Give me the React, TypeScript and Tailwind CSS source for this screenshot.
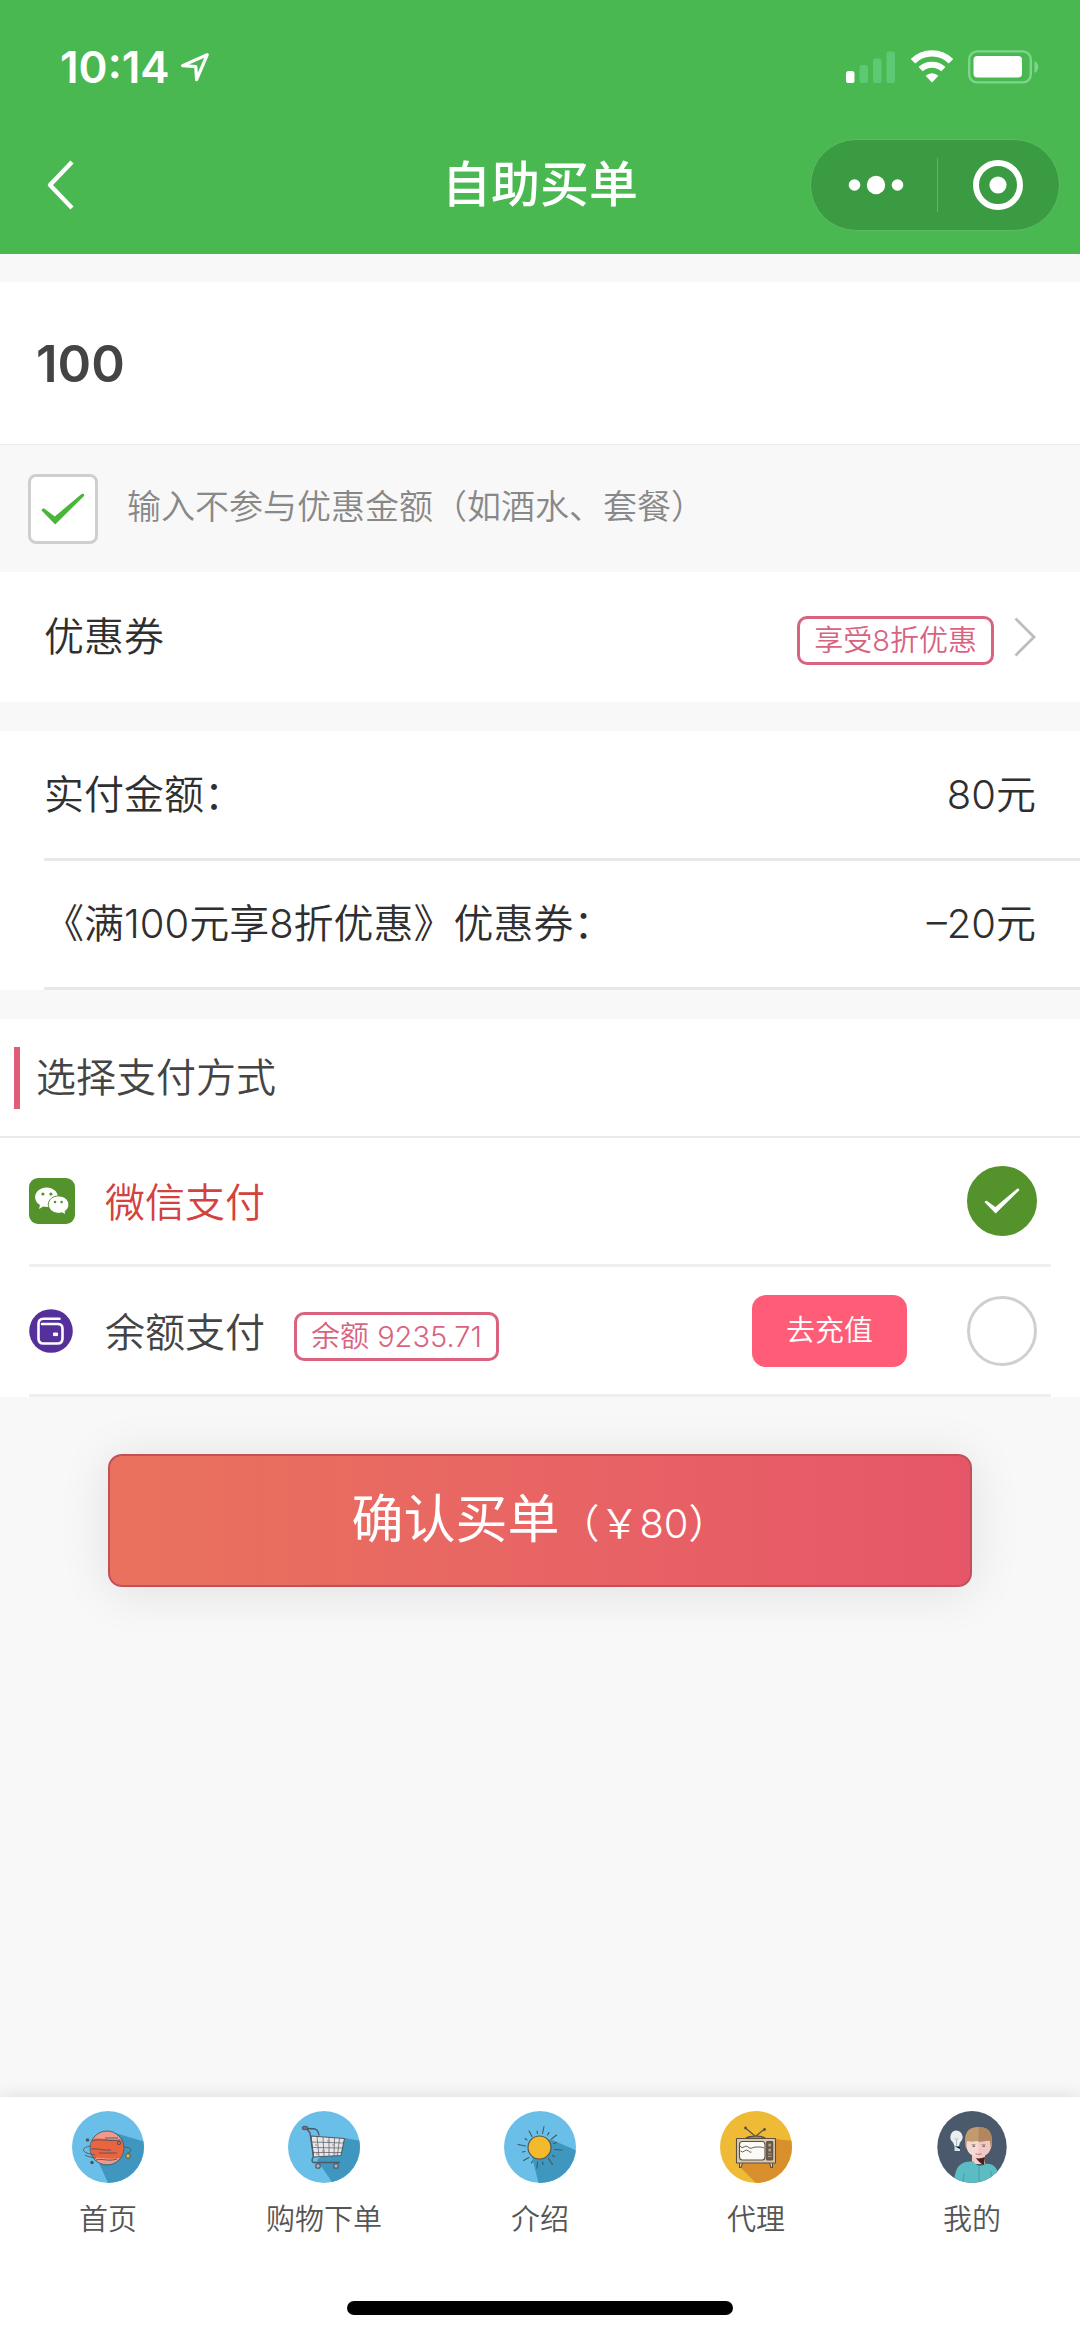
import { useState, type ReactNode } from "react";

function LocationIcon() {
  return (
    <svg viewBox="0 0 30 30" className="size-[30px]" fill="none" stroke="currentColor" strokeWidth="3.2" strokeLinejoin="round" aria-hidden="true">
      <path d="M27.2 2.8 2.6 13.6 15.8 14.6 16.6 27.6Z" />
    </svg>
  );
}

function SignalIcon() {
  return (
    <svg viewBox="0 0 50 32" className="h-8 w-[50px]" aria-hidden="true">
      <rect x="0" y="20" width="8.5" height="12" rx="2.6" fill="#fff" />
      <g fill="#5cca74">
        <rect x="13.5" y="14" width="8.5" height="18" rx="2.6" />
        <rect x="27" y="7.5" width="8.5" height="24.5" rx="2.6" />
        <rect x="40.5" y="0.5" width="8.5" height="31.5" rx="2.6" />
      </g>
    </svg>
  );
}

function WifiIcon() {
  return (
    <svg viewBox="0 0 44 33" className="h-[33px] w-11" fill="none" stroke="#fff" aria-hidden="true">
      <path d="M3 11.2a27 27 0 0 1 38 0" strokeWidth="6.4" />
      <path d="M10.6 19.2a16.5 16.5 0 0 1 22.8 0" strokeWidth="6" />
      <path d="M22 32.4 15.6 25.8a9.2 9.2 0 0 1 12.8 0Z" fill="#fff" stroke="none" />
    </svg>
  );
}

function BatteryIcon() {
  return (
    <svg viewBox="0 0 72 34" className="h-[34px] w-[72px]" aria-hidden="true">
      <rect x="1.2" y="1.4" width="61.6" height="31" rx="8" fill="none" stroke="#7ed68c" strokeWidth="2.4" />
      <rect x="5.5" y="6" width="48.5" height="21.5" rx="4" fill="#fff" />
      <path d="M66.5 11c5 2 5 10 0 12Z" fill="#7ed68c" />
    </svg>
  );
}

function BackIcon() {
  return (
    <svg viewBox="0 0 30 50" className="h-[50px] w-[30px]" fill="none" stroke="#fff" strokeWidth="4.4" aria-hidden="true">
      <path d="M26 2 4 25 26 48" strokeLinejoin="round" />
    </svg>
  );
}

function MoreIcon() {
  return (
    <svg viewBox="0 0 56 20" className="h-5 w-14" fill="#fff" aria-hidden="true">
      <circle cx="6.5" cy="10" r="5.8" />
      <circle cx="28" cy="10" r="9.2" />
      <circle cx="49.5" cy="10" r="5.8" />
    </svg>
  );
}

function TargetIcon() {
  return (
    <svg viewBox="0 0 50 50" className="size-[50px]" aria-hidden="true">
      <circle cx="25" cy="25" r="22" fill="none" stroke="#fff" strokeWidth="6" />
      <circle cx="25" cy="25" r="8.6" fill="#fff" />
    </svg>
  );
}

function WechatIcon() {
  return (
    <svg viewBox="0 0 46 46" className="size-[46px]" aria-hidden="true">
      <rect width="46" height="46" rx="9" fill="#54922c" />
      <path d="M17.6 9.5c6.3 0 11.4 4.3 11.4 9.7s-5.1 9.7-11.4 9.7c-1.2 0-2.300-.1-3.400-.4L10 31l1-4c-3-1.700-4.900-4.500-4.900-7.800 0-5.400 5.200-9.700 11.500-9.700Z" fill="#fff" />
      <path d="M29.600 17.900c5.700 0 10.300 3.900 10.300 8.700 0 2.800-1.500 5.200-3.900 6.800l.8 3.400-3.800-2c-1.100.3-2.200.5-3.400.5-5.700 0-10.300-3.900-10.300-8.700s4.600-8.700 10.300-8.700Z" fill="#fff" stroke="#54922c" strokeWidth="1" />
      <g fill="#54922c">
        <circle cx="13.9" cy="16" r="1.6" />
        <circle cx="21.9" cy="16" r="1.6" />
        <circle cx="26" cy="24" r="1.3" />
        <circle cx="32.6" cy="24" r="1.3" />
      </g>
    </svg>
  );
}

function WalletIcon() {
  return (
    <svg viewBox="0 0 44 44" className="size-11" fill="none" aria-hidden="true">
      <circle cx="22" cy="22" r="21.8" fill="#55309b" />
      <path d="M30.500 9.800H14.500Q9.500 9.800 9.500 15v14.500q0 5 5 5h14q5 0 5-5V19.500q0-4.500-5-4.500H13" stroke="#fff" strokeWidth="2.6" strokeLinecap="round" />
      <path d="M28.500 24H24.500v2.600h4Z" fill="#fff" stroke="#fff" strokeWidth="1" strokeLinejoin="round" />
    </svg>
  );
}

function PlanetIcon() {
  return (
    <svg viewBox="0 0 72 72" className="size-[72px]" fill="none" aria-hidden="true">
      <clipPath id="planet-disc"><circle cx="36" cy="36" r="36" /></clipPath>
      <clipPath id="planet-ball"><circle cx="35" cy="37" r="16.5" /></clipPath>
      <circle cx="36" cy="36" r="36" fill="#6abfe9" />
      <path clipPath="url(#planet-disc)" d="M43 22 74 31V74H37L26 50Z" fill="#3f97bf" />
      <circle cx="35" cy="37" r="16.5" fill="#f0988a" />
      <path clipPath="url(#planet-ball)" d="M16 29c12-4 26 2 38-1v17c-14 6-26 0-38 2Z" fill="#ea6440" />
      <g stroke="#4e5560" strokeWidth="0.9">
        <circle cx="35" cy="37" r="17" />
        <path d="M18.500 35C11 36 9 40 15 42c2 .8 5 1.500 8 2M52 36c8 .5 9 4 3 6.500" />
        <path d="M13 44c2 1.500 7 2.500 11 3M20 30c8-3 17 1 28-1M19 38c6-1 14 2 20 1M27 42h18M33 27h13M24 49c7-2 12 2 21-1" />
      </g>
      <g fill="#4e5560">
        <circle cx="15.5" cy="29" r="1.8" />
        <circle cx="20" cy="51.5" r="1.8" />
      </g>
      <circle cx="47" cy="32" r="1.7" fill="#e9603a" stroke="#4e5560" />
      <circle cx="56" cy="45" r="2.4" fill="#d8b83a" stroke="#4e5560" />
    </svg>
  );
}

function CartIcon() {
  return (
    <svg viewBox="0 0 72 72" className="size-[72px]" fill="none" aria-hidden="true">
      <clipPath id="cart-disc"><circle cx="36" cy="36" r="36" /></clipPath>
      <circle cx="36" cy="36" r="36" fill="#6abfe9" />
      <path clipPath="url(#cart-disc)" d="M56 27 74 30V74H46L29 49Z" fill="#3f97bf" />
      <path d="M23 25 56.500 27.500 53 44.500 25.500 46Z" fill="#e9e6e8" />
      <g stroke="#4c5966" strokeWidth="1.1" strokeLinejoin="round">
        <path d="M23 25 56.500 27.500 53 44.500 25.500 46Z" />
        <path d="M29 25.500 31 45.500M35 26l1 19M41 26.500V45M46.500 27l-.5 18M51.500 27.500 49.500 44.500M23.500 31 55 32M24 36.500 54 37M25 41.500 53.500 41.500" strokeWidth="0.7" />
        <path d="M20 17.500c7 0 10 0 11 7M25.500 46 22 22 19 18M25.500 46c-2 2-2 5 0 5.500H52M30 52v2M48 52v2" strokeWidth="1.4" />
        <ellipse cx="17" cy="17" rx="2.6" ry="1.7" fill="#8a6d76" />
        <circle cx="30" cy="55" r="2.3" fill="#a9b4bb" />
        <circle cx="48" cy="55" r="2.3" fill="#a9b4bb" />
      </g>
      <path d="M27 34h2M34 40h3M44 34h3M39 30h3M28 43h3M46 42h3" stroke="#c07c78" />
    </svg>
  );
}

function SunIcon() {
  return (
    <svg viewBox="0 0 72 72" className="size-[72px]" fill="none" aria-hidden="true">
      <clipPath id="sun-disc"><circle cx="36" cy="36" r="36" /></clipPath>
      <circle cx="36" cy="36" r="36" fill="#6abfe9" />
      <path clipPath="url(#sun-disc)" d="M46 28 74 40V74H35L28 46Z" fill="#3f97bf" />
      <circle cx="35.5" cy="36.5" r="11.5" fill="#f5b92e" stroke="#51584d" strokeWidth="1.2" />
      <g stroke="#44565f" strokeWidth="1.1" strokeLinecap="round">
        <path d="M38.500 22.500 40 15.500M33.500 22.500 33 20M43.500 24l1.500-2.500M28 25.500 25 20M23 29l-2-1.500M21.500 35 14 33.500M21 40.500l-2.500.5M25 46.500 19.500 49.500M28.500 50l-1 2M33.500 51l-.5 6M38.500 51l.5 2.500M44.500 47.500l4 6M48.500 44.500l2 1M50.500 38.500l7.500.5M49.500 32.500l3-1M47.500 28l5-4" />
      </g>
    </svg>
  );
}

function TvIcon() {
  return (
    <svg viewBox="0 0 72 72" className="size-[72px]" fill="none" aria-hidden="true">
      <clipPath id="tv-disc"><circle cx="36" cy="36" r="36" /></clipPath>
      <circle cx="36" cy="36" r="36" fill="#efba35" />
      <path clipPath="url(#tv-disc)" d="M55 28 74 30V74H38L19 55Z" fill="#d9902c" />
      <g stroke="#5c4f42" strokeWidth="1.1" strokeLinejoin="round">
        <path d="M35 25 25.500 17M36 25l8-6.500" />
        <path d="M26 27c3-2.500 16-2.500 19 0Z" fill="#d9c9a8" />
        <path d="M19.500 52v4.500h1.500l1.500-4.500M49.500 52l1.500 4.500h1.500V52" fill="#e6d9c0" />
        <rect x="16.5" y="27.5" width="39" height="24.5" fill="#d8c8ae" />
        <rect x="19.5" y="30.5" width="25.5" height="18.5" rx="3" fill="#fbfaf7" />
        <rect x="46.7" y="30.5" width="6" height="18.5" rx="0.8" fill="#6c5a4a" />
        <path d="M20 35q2 3 4 1t4 0 4 1 4-1 4 0 4 1M20.500 40q2 2 4 0t4 0 3 1" strokeWidth="0.9" />
      </g>
      <circle cx="49.7" cy="34" r="1.5" fill="#b7a58c" />
      <circle cx="49.7" cy="39" r="1.5" fill="#b7a58c" />
      <path d="M48 43h3.500M48 45.500h3.500" stroke="#b7a58c" strokeWidth="0.9" />
      <circle cx="25.5" cy="17" r="1.4" fill="#5c4f42" />
      <circle cx="44.5" cy="18.5" r="1.4" fill="#5c4f42" />
    </svg>
  );
}

function AvatarIcon() {
  return (
    <svg viewBox="0 0 70 72" className="h-[72px] w-[70px]" fill="none" aria-hidden="true">
      <clipPath id="avatar-disc"><ellipse cx="35" cy="36" rx="34.7" ry="36" /></clipPath>
      <g clipPath="url(#avatar-disc)">
        <rect width="70" height="72" fill="#4a596b" />
        <path d="M70 56c-6-2-10 4-9 10l-4 8h13Z" fill="#fff" />
        <path d="M35 43h13v10H35Z" fill="#f3cfc8" />
        <path d="M39 47c3 1 6 0 9-1l-1 8c-3-1-6-4-8-7Z" fill="#4b1f1c" />
        <path d="M17 70c1-9 3-16 10-18.500 5-1.500 7-.5 9-1.500 3 5 8 6 12 3 8-1 13 3 15 16l-6 8H20Z" fill="#5cbcc3" />
      </g>
      <path d="M29 29c-1 9 3 17 12.500 17S55.500 38 54.500 29l-5-6H34Z" fill="#f6d9d2" />
      <path d="M41.500 23v23C51 46 55.500 38 54.500 29l-5-6Z" fill="#f1c8c3" />
      <path d="M29 38c-2.500-13-.5-22 12.500-22s15 9 12.500 22l-1-8c-4-1.500-19 2-23 0Z" fill="#c39a70" />
      <path d="M41.500 16c13 0 15 9 12.500 22l-1-8c-3-1-8 1-11.500 1Z" fill="#b2875f" />
      <path d="M34.500 33.500h4M44.500 33.500h4" stroke="#b08d74" strokeWidth="0.8" />
      <path d="M35.500 35.200H38M45.500 35.200H48" stroke="#4c5664" strokeWidth="1.3" />
      <path d="M38.500 42.800q3 1.200 6 0" stroke="#c9606b" strokeWidth="0.9" />
      <path d="M42 54v17M27 62l-1 8M54 60v5" stroke="#3f8f96" strokeWidth="0.7" />
      <path d="M18.700 19.500a6.700 6.700 0 0 1 4.800 11.500c-1 1-1 2.500-1.500 4.500h-4.500c-.5-2-1-3.500-2-4.500a6.700 6.700 0 0 1 3.200-11.500Z" fill="#e9eef0" />
      <path d="M17.500 27l2 2 1.500-2M19.500 29v6" stroke="#a3adb3" strokeWidth="0.8" />
      <path d="M17.500 35.500H23V40h-5.500Z" fill="#cfe3ea" />
      <path d="M18 35.500h5V38Z" fill="#16181c" />
    </svg>
  );
}

function CheckMark({ className }: { className: string }) {
  return (
    <svg viewBox="0 0 44 32" className={className} fill="currentColor" aria-hidden="true">
      <path d="M0.600 17.600Q0.800 15.200 3.200 15.600L13.800 23.400 40.600 1Q43.400 0 43.300 2.800L14.200 31.400Z" />
    </svg>
  );
}

function Tag({ children }: { children: ReactNode }) {
  return (
    <span className="rounded-[10px] border-3 border-[#d9637f] px-[14px] text-[29px] leading-[43px] text-[#d9637f]">
      {children}
    </span>
  );
}

function SummaryRow({ label, value }: { label: string; value: string }) {
  return (
    <div className="ml-11 flex h-[129px] items-center justify-between border-b-3 border-[#e8e8e8] pr-11 text-[40px] text-[#2f2f2f] first:h-[130px]">
      <dt>{label}</dt>
      <dd>{value}</dd>
    </div>
  );
}

type Method = "wechat" | "balance";

function PayRadio({ id, checked, onSelect }: { id: Method; checked: boolean; onSelect: (m: Method) => void }) {
  return (
    <span className="mr-[14px] grid place-items-center">
      <input
        id={id}
        type="radio"
        name="payment"
        checked={checked}
        onChange={() => onSelect(id)}
        className="peer col-start-1 row-start-1 size-[70px] appearance-none rounded-full border-3 border-[#cfcfcf] bg-white checked:border-[#54922c] checked:bg-[#54922c]"
      />
      <CheckMark className="pointer-events-none invisible col-start-1 row-start-1 h-[26px] w-9 text-white peer-checked:visible" />
    </span>
  );
}

const tabs = [
  { label: "首页", icon: <PlanetIcon /> },
  { label: "购物下单", icon: <CartIcon /> },
  { label: "介绍", icon: <SunIcon /> },
  { label: "代理", icon: <TvIcon /> },
  { label: "我的", icon: <AvatarIcon /> },
];

export default function App() {
  const [amount, setAmount] = useState("100");
  const [excluded, setExcluded] = useState(true);
  const [method, setMethod] = useState<Method>("wechat");

  return (
    <div className="flex min-h-screen flex-col bg-[#f8f8f8] font-['Inter','Noto_Sans_CJK_SC',sans-serif] font-[350] text-[#444]">
      <header className="bg-[#49b850] text-white">
        <div className="flex h-[127px] items-center justify-between pt-[6px] pr-10 pl-[60px]">
          <div className="flex items-center gap-[10px] text-[44px] font-semibold">
            <span>10:14</span>
            <LocationIcon />
          </div>
          <div className="flex items-center gap-[14px]">
            <SignalIcon />
            <WifiIcon />
            <BatteryIcon />
          </div>
        </div>
        <div className="grid h-[127px] grid-cols-[1fr_auto_1fr] items-center px-5 pb-3">
          <button type="button" aria-label="返回" className="justify-self-start pl-[26px]">
            <BackIcon />
          </button>
          <h1 className="text-[49px] font-medium">自助买单</h1>
          <div className="flex h-[92px] w-[250px] items-center justify-self-end rounded-full border border-[#5bbd62] bg-[#3b9b42]">
            <button type="button" aria-label="更多" className="flex h-full flex-1 items-center justify-center pl-1">
              <MoreIcon />
            </button>
            <span className="h-[54px] w-px bg-[#62b368]" />
            <button type="button" aria-label="关闭" className="flex h-full flex-1 items-center justify-center">
              <TargetIcon />
            </button>
          </div>
        </div>
      </header>

      <main className="pt-7">
        <input
          type="text"
          inputMode="decimal"
          aria-label="消费金额"
          value={amount}
          onChange={(e) => setAmount(e.target.value)}
          className="block h-[163px] w-full border-b border-[#ececec] bg-white px-9 text-[51px] font-semibold text-[#444] outline-none"
        />

        <div className="flex h-[127px] items-center gap-[29px] pl-7">
          <span className="grid place-items-center">
            <input
              id="excluded"
              type="checkbox"
              checked={excluded}
              onChange={(e) => setExcluded(e.target.checked)}
              className="peer col-start-1 row-start-1 size-[70px] appearance-none rounded-lg border-3 border-[#cfcfcf] bg-white"
            />
            <CheckMark className="pointer-events-none invisible col-start-1 row-start-1 h-8 w-11 text-[#4bb53a] peer-checked:visible" />
          </span>
          <label htmlFor="excluded" className="pb-1 text-[34px] text-[#888]">
            输入不参与优惠金额（如酒水、套餐）
          </label>
        </div>

        <button type="button" className="flex h-[130px] w-full items-center bg-white px-11 text-left">
          <span className="flex flex-1 items-baseline justify-between text-[40px] text-[#2f2f2f]">
            优惠券
            <Tag>享受8折优惠</Tag>
          </span>
          <svg viewBox="0 0 22 40" className="ml-5 h-10 w-[22px]" fill="none" stroke="#bdbdbd" strokeWidth="2.8" aria-hidden="true">
            <path d="M1.500 1.500 20 20 1.500 38.500" />
          </svg>
        </button>

        <dl className="mt-[29px] bg-white">
          <SummaryRow label="实付金额：" value="80元" />
          <SummaryRow label="《满100元享8折优惠》优惠券：" value="–20元" />
        </dl>

        <section className="mt-[29px] bg-white">
          <div className="flex h-[119px] items-center gap-4 border-b-2 border-[#e8e9ee] pl-[14px]">
            <span className="h-[62px] w-[6px] bg-[#de5d77]" />
            <h2 className="text-[40px]">选择支付方式</h2>
          </div>
          <div className="mx-[29px] flex h-[129px] items-center border-b-3 border-[#efefef]">
            <WechatIcon />
            <label htmlFor="wechat" className="ml-[30px] flex-1 pt-1 text-[40px] text-[#d2423f]">微信支付</label>
            <PayRadio id="wechat" checked={method === "wechat"} onSelect={setMethod} />
          </div>
          <div className="mx-[29px] flex h-[130px] items-center border-b-3 border-[#efefef]">
            <WalletIcon />
            <label htmlFor="balance" className="ml-8 flex flex-1 items-baseline gap-[29px] pt-1">
              <span className="text-[40px]">余额支付</span>
              <Tag>余额 9235.71</Tag>
            </label>
            <button type="button" className="mr-[60px] h-[72px] w-[155px] rounded-[14px] bg-[#ff5c78] text-[29px] text-white">
              去充值
            </button>
            <PayRadio id="balance" checked={method === "balance"} onSelect={setMethod} />
          </div>
        </section>

        <div className="px-[10%] pt-[57px]">
          <button
            type="button"
            className="flex h-[133px] w-full items-baseline justify-center rounded-[14px] border-2 border-[#c2505a] bg-linear-to-r from-[#ea725d] to-[#e65669] text-[52px] leading-[128px] text-white shadow-[0_4px_50px_rgba(0,0,0,0.1)]"
          >
            <span className="font-normal">确认买单</span>
            <span className="text-[40px]">（￥80）</span>
          </button>
        </div>
      </main>

      <footer className="mt-auto bg-white shadow-[0_-2px_16px_rgba(0,0,0,0.1)]">
        <nav className="grid grid-cols-5 pt-[14px]">
          {tabs.map((tab) => (
            <a key={tab.label} href="#" className="flex flex-col items-center gap-[14px] text-[29px] leading-[46px] text-[#555]">
              {tab.icon}
              {tab.label}
            </a>
          ))}
        </nav>
        <div className="mx-auto mt-[58px] mb-6 h-[14px] w-[386px] rounded-full bg-black" />
      </footer>
    </div>
  );
}
